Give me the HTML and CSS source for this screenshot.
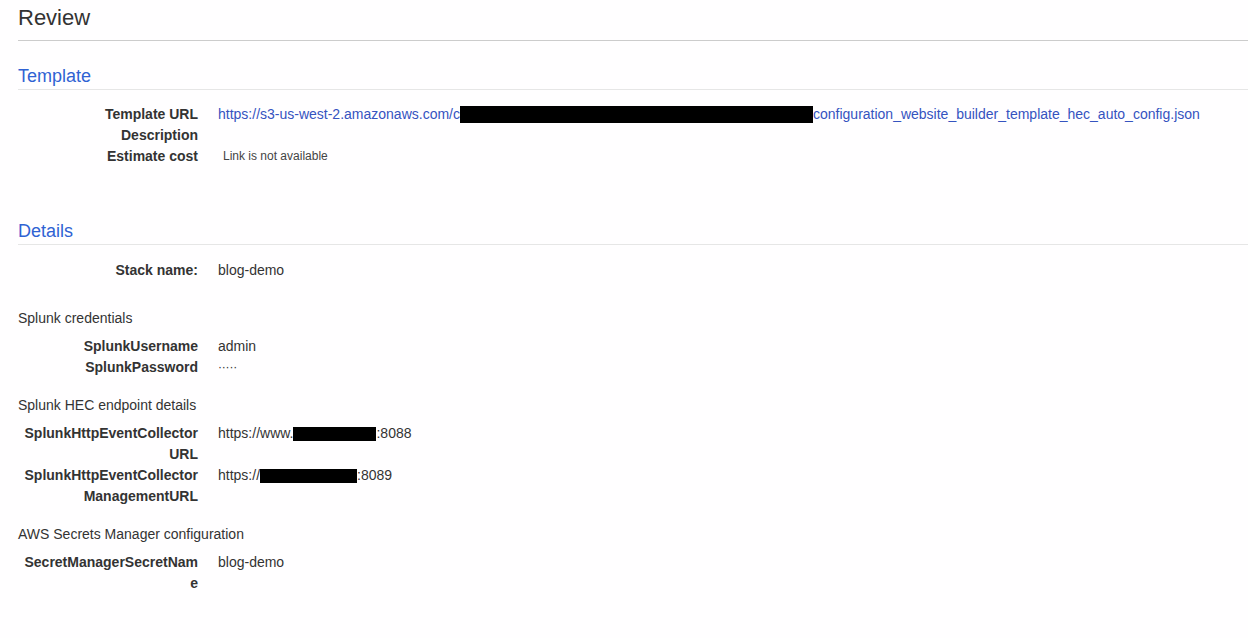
FILE: index.html
```html
<!DOCTYPE html>
<html>
<head>
<meta charset="utf-8">
<link rel="stylesheet" href="styles.css">
</head>
<body>
<div class="page">
  <h1 class="title">Review</h1>

  <section class="section">
    <h2 class="section-title">Template</h2>
    <div class="rows">
      <div class="row">
        <div class="label">Template URL</div>
        <div class="value"><a class="link" href="#">https://s3-us-west-2.amazonaws.com/c<span class="redact redact-url"></span>configuration_website_builder_template_hec_auto_config.json</a></div>
      </div>
      <div class="row">
        <div class="label">Description</div>
        <div class="value"></div>
      </div>
      <div class="row">
        <div class="label">Estimate cost</div>
        <div class="value small">Link is not available</div>
      </div>
    </div>
  </section>

  <section class="section details">
    <h2 class="section-title">Details</h2>
    <div class="rows stack-rows">
      <div class="row">
        <div class="label">Stack name:</div>
        <div class="value">blog-demo</div>
      </div>
    </div>

    <div class="group first-group">
      <div class="group-title">Splunk credentials</div>
      <div class="rows">
        <div class="row">
          <div class="label">SplunkUsername</div>
          <div class="value">admin</div>
        </div>
        <div class="row">
          <div class="label">SplunkPassword</div>
          <div class="value dots">·····</div>
        </div>
      </div>
    </div>

    <div class="group">
      <div class="group-title">Splunk HEC endpoint details</div>
      <div class="rows">
        <div class="row">
          <div class="label">SplunkHttpEventCollector URL</div>
          <div class="value">https://www.<span class="redact redact-a"></span>:8088</div>
        </div>
        <div class="row">
          <div class="label">SplunkHttpEventCollector ManagementURL</div>
          <div class="value">https://<span class="redact redact-b"></span>:8089</div>
        </div>
      </div>
    </div>

    <div class="group">
      <div class="group-title">AWS Secrets Manager configuration</div>
      <div class="rows">
        <div class="row">
          <div class="label breakall">SecretManagerSecretName</div>
          <div class="value">blog-demo</div>
        </div>
      </div>
    </div>
  </section>
</div>
</body>
</html>
```

FILE: styles.css
```css
html, body {
  margin: 0;
  padding: 0;
  background: #fffeff;
}

body {
  font-family: "Liberation Sans", Arial, Helvetica, sans-serif;
  font-size: 14px;
  color: #333;
}

.page {
  padding-left: 18px;
}

.title {
  margin: 0;
  padding-top: 5px;
  padding-bottom: 9px;
  font-size: 22px;
  line-height: 26px;
  font-weight: normal;
  color: #333;
  border-bottom: 1px solid #cccccc;
}

.section-title {
  margin: 0;
  padding-bottom: 2px;
  font-size: 18px;
  line-height: 22px;
  font-weight: normal;
  color: #2f62d3;
  border-bottom: 1px solid #e6e6e6;
}

.section {
  margin-top: 24px;
}

.details {
  margin-top: 53px;
}

.rows {
  margin-top: 14px;
}

.stack-rows {
  margin-top: 15px;
}

.group .rows {
  margin-top: 8px;
}

.row {
  display: flex;
  gap: 20px;
  line-height: 21px;
}

.label {
  width: 180px;
  flex: none;
  text-align: right;
  font-weight: bold;
  color: #333;
}

.breakall {
  word-break: break-all;
}

.value {
  flex: 1;
  color: #333;
}

.small {
  font-size: 12px;
  padding-left: 5px;
  color: #444;
}

.dots {
  font-size: 12px;
  letter-spacing: -0.2px;
}

.link {
  color: #3553bf;
  text-decoration: none;
}

.group {
  margin-top: 17px;
}

.first-group {
  margin-top: 27px;
}

.group-title {
  line-height: 20px;
  color: #333;
}

.redact {
  display: inline-block;
  background: #000;
}

.redact-url {
  width: 353px;
  height: 17px;
  vertical-align: -4px;
}

.redact-a {
  width: 83px;
  height: 14px;
  vertical-align: -3px;
}

.redact-b {
  width: 97px;
  height: 14px;
  vertical-align: -3px;
}
```
